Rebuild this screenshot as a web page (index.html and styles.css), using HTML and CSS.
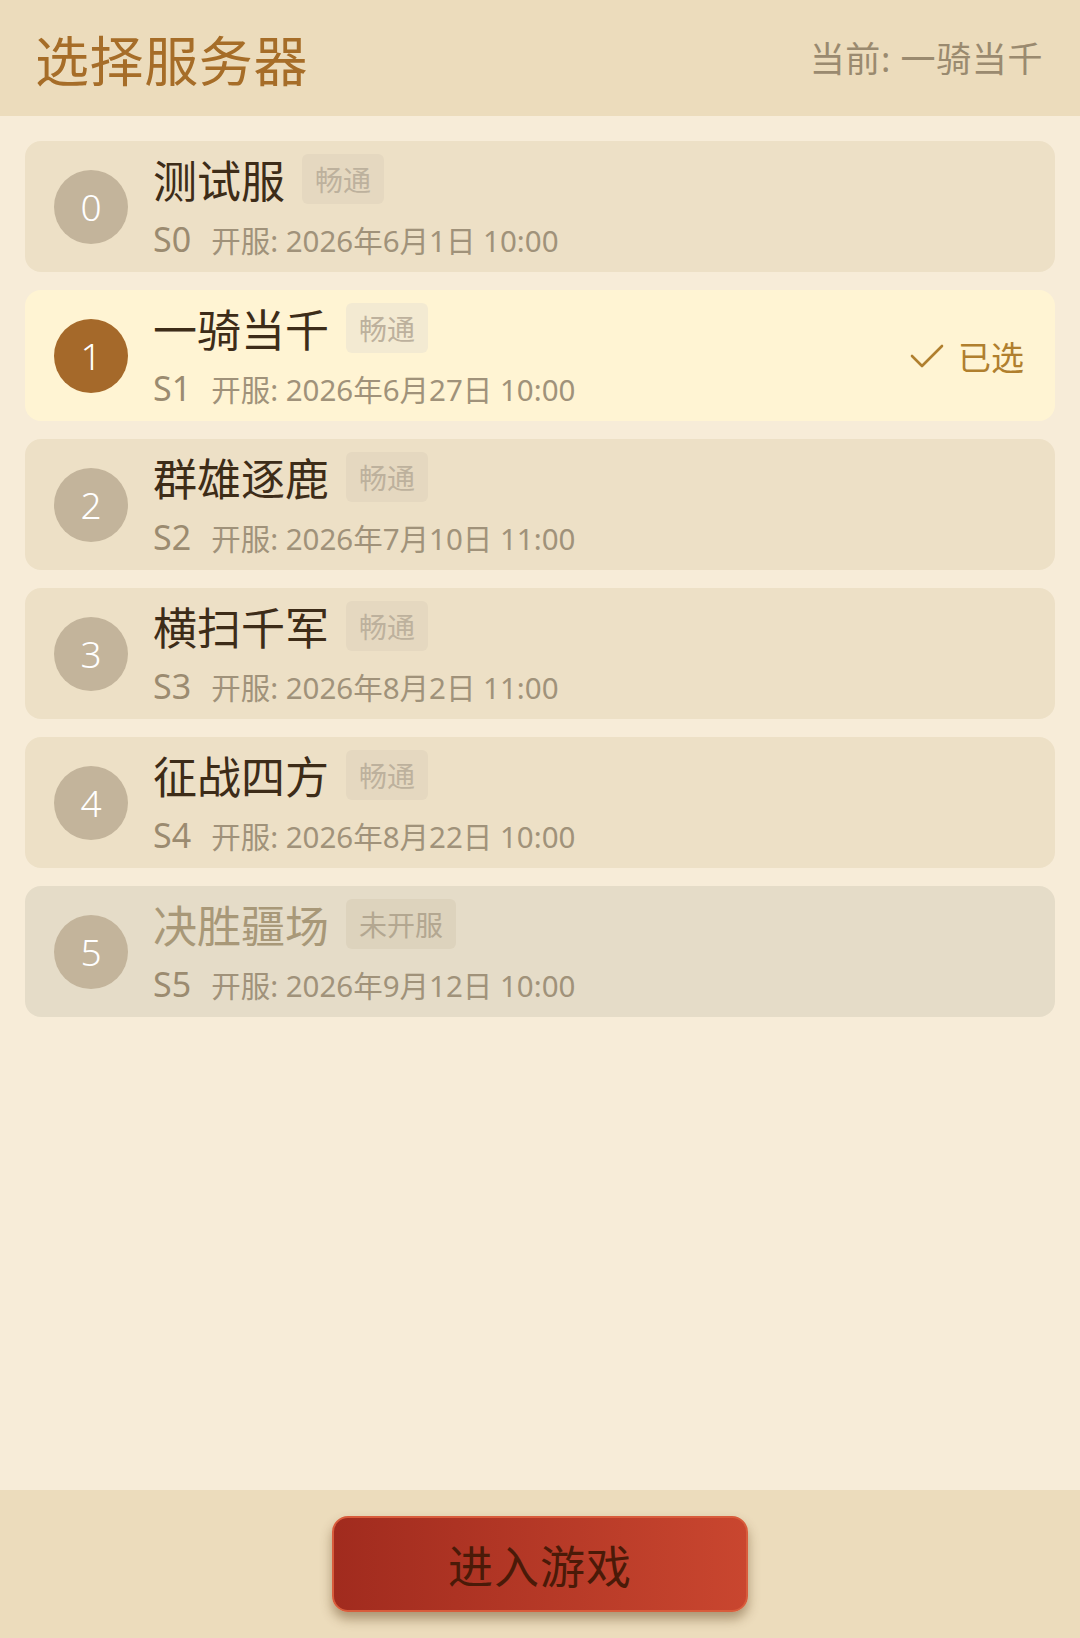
FILE: index.html
```html
<!DOCTYPE html>
<html lang="zh-CN">
<head>
<meta charset="utf-8">
<title>选择服务器</title>
<link rel="stylesheet" href="styles.css">
</head>
<body>
<div class="app">
  <header class="header">
    <h1 class="title">选择服务器</h1>
    <div class="current">当前: 一骑当千</div>
  </header>
  <main class="list">
    <div class="card">
      <div class="num">0</div>
      <div class="info">
        <div class="name-row"><span class="name">测试服</span><span class="tag">畅通</span></div>
        <div class="meta"><span class="sid">S0</span><span class="date">开服: 2026年6月1日 10:00</span></div>
      </div>
    </div>
    <div class="card selected">
      <div class="num">1</div>
      <div class="info">
        <div class="name-row"><span class="name">一骑当千</span><span class="tag">畅通</span></div>
        <div class="meta"><span class="sid">S1</span><span class="date">开服: 2026年6月27日 10:00</span></div>
      </div>
      <div class="chosen">
        <svg class="check" viewBox="0 0 34 26" width="34" height="26"><path d="M2 13 L12 23 L32 3" fill="none" stroke="currentColor" stroke-width="2.6" stroke-linecap="round" stroke-linejoin="round"/></svg>
        <span>已选</span>
      </div>
    </div>
    <div class="card">
      <div class="num">2</div>
      <div class="info">
        <div class="name-row"><span class="name">群雄逐鹿</span><span class="tag">畅通</span></div>
        <div class="meta"><span class="sid">S2</span><span class="date">开服: 2026年7月10日 11:00</span></div>
      </div>
    </div>
    <div class="card">
      <div class="num">3</div>
      <div class="info">
        <div class="name-row"><span class="name">横扫千军</span><span class="tag">畅通</span></div>
        <div class="meta"><span class="sid">S3</span><span class="date">开服: 2026年8月2日 11:00</span></div>
      </div>
    </div>
    <div class="card">
      <div class="num">4</div>
      <div class="info">
        <div class="name-row"><span class="name">征战四方</span><span class="tag">畅通</span></div>
        <div class="meta"><span class="sid">S4</span><span class="date">开服: 2026年8月22日 10:00</span></div>
      </div>
    </div>
    <div class="card disabled">
      <div class="num">5</div>
      <div class="info">
        <div class="name-row"><span class="name">决胜疆场</span><span class="tag">未开服</span></div>
        <div class="meta"><span class="sid">S5</span><span class="date">开服: 2026年9月12日 10:00</span></div>
      </div>
    </div>
  </main>
  <footer class="footer">
    <button class="enter">进入游戏</button>
  </footer>
</div>
</body>
</html>
```
FILE: styles.css
```css
* { box-sizing: border-box; }
html, body {
  margin: 0;
  padding: 0;
}
body {
  font-family: "Noto Sans", "Noto Sans CJK SC", sans-serif;
  background: #f7ecd8;
}
.app {
  width: 1080px;
  height: 1638px;
  display: flex;
  flex-direction: column;
}
.header {
  height: 116px;
  flex: none;
  background: #ecdcbc;
  display: flex;
  align-items: center;
  justify-content: space-between;
  padding: 0 37px 0 35px;
}
.title {
  margin: 0;
  font-family: "Noto Sans CJK SC", sans-serif;
  font-size: 54px;
  font-weight: 400;
  color: #a66d28;
  letter-spacing: 0.6px;
}
.current {
  font-size: 35px;
  color: #9a8a6f;
  line-height: 1;
  letter-spacing: 0.6px;
}
.list {
  flex: 1;
  padding: 25px 25px;
  display: flex;
  flex-direction: column;
  gap: 18px;
}
.card {
  height: 131px;
  background: #ede0c6;
  border-radius: 16px;
  display: flex;
  align-items: center;
  padding: 0 31px 0 29px;
}
.card.selected { background: #fff4d3; }
.card.disabled { background: #e5dcc8; }
.num {
  width: 74px;
  height: 74px;
  border-radius: 50%;
  background: #c3b49b;
  color: #fff;
  font-size: 37px;
  font-weight: 300;
  display: flex;
  align-items: center;
  justify-content: center;
  flex: none;
}
.selected .num { background: #a5692a; }
.info {
  margin-left: 25px;
  display: flex;
  flex-direction: column;
  gap: 16px;
  flex: 1;
}
.name-row {
  display: flex;
  align-items: center;
  height: 50px;
}
.name {
  font-family: "Noto Sans CJK SC", sans-serif;
  font-size: 44px;
  color: #3d2c18;
  line-height: 50px;
}
.disabled .name { color: #a89878; }
.tag {
  margin-left: 17px;
  height: 50px;
  padding: 0 13px;
  border-radius: 6px;
  background: #e5d8c0;
  color: #bdb19d;
  font-family: "Noto Sans CJK SC", sans-serif;
  font-size: 28px;
  display: flex;
  align-items: center;
}
.selected .tag { background: #f3ead2; }
.disabled .tag { background: #ddd3bd; color: #b3a791; }
.meta {
  display: flex;
  align-items: baseline;
  line-height: 38px;
  color: #a0927a;
}
.sid {
  font-size: 34px;
  color: #9b8b70;
}
.date {
  font-size: 29.5px;
  margin-left: 20px;
}
.chosen {
  display: flex;
  align-items: center;
  gap: 14px;
  color: #b07f2e;
  font-family: "Noto Sans CJK SC", sans-serif;
  font-size: 33px;
}
.check { display: block; }
.footer {
  height: 148px;
  flex: none;
  background: #ecdcbc;
  display: flex;
  align-items: center;
  justify-content: center;
}
.enter {
  width: 416px;
  height: 96px;
  border-radius: 16px;
  border: 2px solid #d85c3c;
  background: linear-gradient(90deg, #a12b1e 0%, #c9462f 100%);
  color: #4a1a08;
  font-family: "Noto Sans CJK SC", sans-serif;
  font-size: 45px;
  box-shadow: 0 7px 12px rgba(90, 60, 25, 0.45);
  letter-spacing: 1px;
  cursor: pointer;
}
```
